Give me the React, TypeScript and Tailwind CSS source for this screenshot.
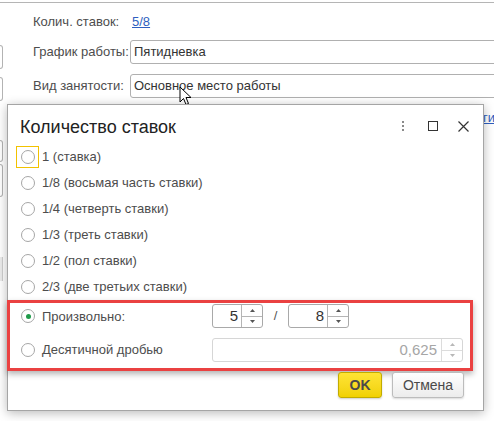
import React from 'react';

const options = [
  '1 (ставка)',
  '1/8 (восьмая часть ставки)',
  '1/4 (четверть ставки)',
  '1/3 (треть ставки)',
  '1/2 (пол ставки)',
  '2/3 (две третьих ставки)',
];

function Radio({ checked = false }: { checked?: boolean }) {
  return (
    <span className="flex items-center justify-center w-[14px] h-[14px] shrink-0 rounded-full border border-[#a6a6a6] bg-white">
      {checked && <span className="w-[5px] h-[5px] rounded-full bg-[#1f9a4a]" />}
    </span>
  );
}

function SpinButtons({ disabled = false }: { disabled?: boolean }) {
  const fill = disabled ? '#b8b8b8' : '#555';
  return (
    <div className={`flex flex-col w-[21px] border-l ${disabled ? 'border-[#dcdcdc]' : 'border-[#b5b5b5]'}`}>
      <div className={`flex-1 flex items-center justify-center border-b ${disabled ? 'border-[#dcdcdc]' : 'border-[#b5b5b5]'}`}>
        <svg width="5" height="3" viewBox="0 0 5 3"><path d="M2.5 0 L5 3 L0 3 Z" fill={fill} /></svg>
      </div>
      <div className="flex-1 flex items-center justify-center">
        <svg width="5" height="3" viewBox="0 0 5 3"><path d="M0 0 L5 0 L2.5 3 Z" fill={fill} /></svg>
      </div>
    </div>
  );
}

function Spinner({ value, width }: { value: string; width: string }) {
  return (
    <div className={`flex h-[24px] ${width} border border-[#a9a9a9] rounded-[3px] bg-white`}>
      <div className="flex-1 flex items-center justify-end pr-[3px] text-[15px] text-[#333]">{value}</div>
      <SpinButtons />
    </div>
  );
}

export default function App() {
  return (
    <div className="relative w-[494px] h-[421px] overflow-hidden bg-white font-['Liberation_Sans',Arial,sans-serif] text-[13px] text-[#4d4d4d]">
      {/* background form */}
      <div className="mt-[2px] border-t border-[#b5b5b5] flex">
        <div className="flex flex-col w-[3px] shrink-0">
          <div className="mt-[42px] h-[24px] border-r border-y border-[#b3b3b3] rounded-r-[3px]" />
          <div className="mt-[8px] h-[24px] border-r border-y border-[#b3b3b3] rounded-r-[3px]" />
          <div className="mt-[39px] h-[22px] border-r border-y border-[#b3b3b3] rounded-r-[3px]" />
          <div className="mt-[2px] h-[33px] border-r border-y border-[#b3b3b3] rounded-r-[3px]" />
          <div className="mt-[60px] h-[24px] bg-[#ececec] border-r border-[#d0d0d0]" />
        </div>
        <div className="flex flex-col pl-[30px] pt-[7px]">
          <div className="flex items-center h-[24px]">
            <span className="w-[97px]">Колич. ставок:</span>
            <span className="ml-[2px] text-[#2f5fc0] underline">5/8</span>
          </div>
          <div className="flex items-center h-[24px] mt-[6px]">
            <span className="w-[97px]">График работы:</span>
            <div className="w-[400px] h-[24px] border border-[#b0b0b0] rounded-[3px] flex items-center pl-[3px] text-[#333]">Пятидневка</div>
          </div>
          <div className="flex items-center h-[24px] mt-[10px]">
            <span className="w-[97px]">Вид занятости:</span>
            <div className="w-[400px] h-[24px] border border-[#b0b0b0] rounded-[3px] flex items-center pl-[3px] text-[#333]">Основное место работы</div>
          </div>
          <div className="mt-[10px] pl-[450px] text-[#2f5fc0] underline whitespace-nowrap">ги</div>
        </div>
      </div>

      {/* mouse cursor */}
      <svg className="absolute left-[179px] top-[86px]" width="13" height="20" viewBox="0 0 13 20">
        <path d="M1 1 L1 16 L4.5 12.5 L7 18.5 L9.5 17.5 L7 11.5 L12 11.5 Z" fill="white" stroke="black" strokeWidth="1" strokeLinejoin="round" />
      </svg>

      {/* dialog */}
      <div className="absolute left-[7px] top-[104px] w-[477px] flex flex-col border border-[#a5a5a5] bg-white shadow-[0_2px_10px_rgba(0,0,0,0.28)]">
        <div className="flex h-[39px] items-start">
          <div className="mt-[11px] ml-[12px] text-[18px] leading-[22px] text-[#222]">Количество ставок</div>
          <div className="ml-auto mt-[15px] mr-[14px] flex items-center h-[12px]">
            <div className="flex flex-col gap-[2px]">
              <span className="w-[2px] h-[2px] bg-[#8a8a8a]" />
              <span className="w-[2px] h-[2px] bg-[#8a8a8a]" />
              <span className="w-[2px] h-[2px] bg-[#8a8a8a]" />
            </div>
            <span className="ml-[24px] w-[10px] h-[10px] border-[1.5px] border-[#333]" />
            <svg className="ml-[20px]" width="11" height="11" viewBox="0 0 11 11">
              <path d="M0.5 0.5 L10.5 10.5 M10.5 0.5 L0.5 10.5" stroke="#333" strokeWidth="1.2" />
            </svg>
          </div>
        </div>

        <div className="flex flex-col">
          {options.map((o, i) => (
            <div key={o} className="flex items-center h-[26px]">
              <div className={`ml-[8px] flex items-center justify-center w-[23px] h-[22px] border ${i === 0 ? 'border-[#f2c200]' : 'border-transparent'}`}>
                <Radio />
              </div>
              <span className="ml-[3px]">{o}</span>
            </div>
          ))}
        </div>

        <div className="-ml-[1px] w-[466px] border-[3px] border-[#ea4141] pt-[1px] pb-[6px] shadow-[0_3px_6px_rgba(0,0,0,0.3)]">
          <div className="flex items-center h-[24px]">
            <div className="ml-[11px] flex items-center">
              <Radio checked />
              <span className="ml-[7px] w-[170px] pt-[2px]">Произвольно:</span>
            </div>
            <Spinner value="5" width="w-[51px]" />
            <span className="w-[25px] text-center text-[#555]">/</span>
            <Spinner value="8" width="w-[61px]" />
          </div>
          <div className="flex items-center h-[24px] mt-[10px]">
            <div className="ml-[11px] flex items-center">
              <Radio />
              <span className="ml-[7px] w-[170px]">Десятичной дробью</span>
            </div>
            <div className="flex h-[24px] w-[251px] border border-[#d6d6d6] rounded-[3px] bg-white">
              <div className="flex-1 flex items-center justify-end pr-[4px] text-[15px] text-[#a6a6a6]">0,625</div>
              <SpinButtons disabled />
            </div>
          </div>
        </div>

        <div className="flex justify-end gap-[10px] mt-[1px] pr-[19px] pb-[12px]">
          <button className="w-[44px] h-[26px] rounded-[3px] border border-[#c2ac00] bg-gradient-to-b from-[#ffe433] to-[#f1d100] font-bold text-[14px] text-[#4a4a4a] shadow-[0_1px_2px_rgba(0,0,0,0.2)]">OK</button>
          <button className="w-[72px] h-[26px] rounded-[3px] border border-[#bcbcbc] bg-gradient-to-b from-white to-[#ececec] text-[14px] text-[#4a4a4a] shadow-[0_1px_2px_rgba(0,0,0,0.15)]">Отмена</button>
        </div>
      </div>
    </div>
  );
}
